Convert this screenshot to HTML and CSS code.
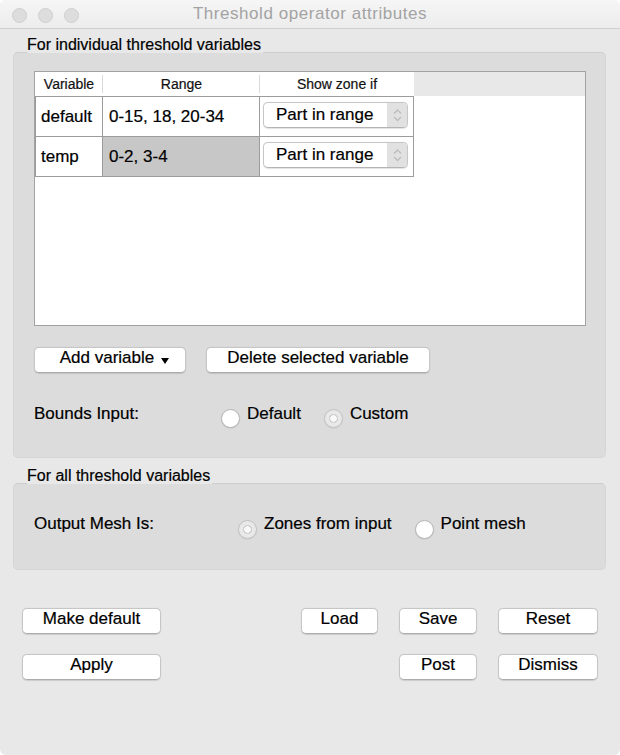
FILE: index.html
```html
<!DOCTYPE html>
<html>
<head>
<meta charset="utf-8">
<title>Threshold operator attributes</title>
<link rel="stylesheet" href="styles.css">
</head>
<body>
<div class="window">
  <div class="titlebar">
    <div class="lights">
      <span class="light"></span><span class="light"></span><span class="light"></span>
    </div>
    <div class="title">Threshold operator attributes</div>
    <div></div>
  </div>

  <div class="content">
    <div class="group-label"><span>For individual threshold variables</span></div>
    <div class="group group-vars">
      <div class="table">
        <div class="thead">
          <div class="th c1">Variable</div>
          <div class="th c2">Range</div>
          <div class="th c3">Show zone if</div>
        </div>
        <div class="tr">
          <div class="td c1">default</div>
          <div class="td c2">0-15, 18, 20-34</div>
          <div class="td c3">
            <div class="combo">
              <span class="combo-text">Part in range</span>
              <span class="stepper"><svg width="20" height="24" viewBox="0 0 20 24"><polyline points="7,10.5 10.5,7 14,10.5" /><polyline points="7,14 10.5,17.5 14,14" /></svg></span>
            </div>
          </div>
        </div>
        <div class="tr last">
          <div class="td c1">temp</div>
          <div class="td c2 selected">0-2, 3-4</div>
          <div class="td c3">
            <div class="combo">
              <span class="combo-text">Part in range</span>
              <span class="stepper"><svg width="20" height="24" viewBox="0 0 20 24"><polyline points="7,10.5 10.5,7 14,10.5" /><polyline points="7,14 10.5,17.5 14,14" /></svg></span>
            </div>
          </div>
        </div>
      </div>

      <div class="btn-row">
        <button class="btn btn-add">Add variable <span class="caret"></span></button>
        <button class="btn btn-delete">Delete selected variable</button>
      </div>

      <div class="radio-row">
        <div class="row-label bounds-label">Bounds Input:</div>
        <div class="radio-opt"><span class="radio"></span><span class="opt-text">Default</span></div>
        <div class="radio-opt"><span class="radio dim"></span><span class="opt-text">Custom</span></div>
      </div>
    </div>

    <div class="group-label second"><span>For all threshold variables</span></div>
    <div class="group group-all">
      <div class="radio-row">
        <div class="row-label mesh-label">Output Mesh Is:</div>
        <div class="radio-opt"><span class="radio dim"></span><span class="opt-text">Zones from input</span></div>
        <div class="radio-opt"><span class="radio"></span><span class="opt-text">Point mesh</span></div>
      </div>
    </div>

    <div class="actions">
      <div class="action-row">
        <button class="btn w-wide">Make default</button>
        <div class="right-group">
          <button class="btn w-load">Load</button>
          <button class="btn w-mid">Save</button>
          <button class="btn w-big">Reset</button>
        </div>
      </div>
      <div class="action-row">
        <button class="btn w-wide">Apply</button>
        <div class="right-group">
          <button class="btn w-mid">Post</button>
          <button class="btn w-big">Dismiss</button>
        </div>
      </div>
    </div>
  </div>
</div>
</body>
</html>
```

FILE: styles.css
```css
* { box-sizing: border-box; }

html, body {
  margin: 0;
  padding: 0;
  background: #ffffff;
}

body {
  font-family: "Liberation Sans", Arial, Helvetica, sans-serif;
  color: #000;
  -webkit-text-stroke: 0.2px;
}

.window {
  width: 620px;
  height: 755px;
  background: #e8e8e8;
  border-radius: 6px;
  overflow: hidden;
}

/* Title bar */
.titlebar {
  height: 29px;
  border-bottom: 1px solid #d0d0d0;
  background: linear-gradient(#f6f6f6, #ececec);
  display: grid;
  grid-template-columns: 1fr auto 1fr;
  align-items: center;
}

.lights {
  display: flex;
  gap: 11px;
  padding-left: 12px;
  padding-top: 2px;
}

.light {
  width: 15px;
  height: 15px;
  border-radius: 50%;
  background: #dddddd;
  border: 1px solid #cfcfcf;
}

.title {
  font-size: 17px;
  line-height: 28px;
  letter-spacing: 0.55px;
  color: #a3a3a3;
  -webkit-text-stroke: 0;
}

/* Content */
.content {
  padding: 8px 14px 0 13px;
}

.group-label {
  font-size: 16px;
  line-height: 16px;
  padding-left: 14px;
  margin-bottom: -1px;
}

.group-label span {
  display: inline-block;
  background: #e8e8e8;
  padding-right: 2px;
}

.group-label.second {
  margin-top: 10px;
}

.group {
  background: #dcdcdc;
  border: 1px solid #d5d5d5;
  border-top-color: #cdcdcd;
  border-radius: 5px;
}

.group-vars {
  padding: 18px 19px 29px 20px;
}

.group-all {
  padding: 30px 19px 30px 20px;
}

/* Table */
.table {
  height: 255px;
  background: #fff;
  border: 1px solid #a2a2a2;
}

.thead {
  display: flex;
  height: 24px;
  background: #e8e8e8;
}

.th {
  background: #fff;
  font-size: 14px;
  line-height: 24px;
  text-align: center;
  color: #111;
}

.th.c1, .th.c2 {
  background: linear-gradient(#dadada, #dadada) right 3px / 1px 18px no-repeat, #fff;
}

.th.c1 { width: 68px; }
.th.c2 { width: 157px; }
.th.c3 { width: 154px; }

.tr {
  display: flex;
  width: 379px;
  height: 40px;
  border-left: 1px solid #9c9c9c;
}

.tr.last {
  height: 41px;
}

.td {
  border-top: 1px solid #9c9c9c;
  border-right: 1px solid #9c9c9c;
  font-size: 17px;
  display: flex;
  align-items: center;
}

.tr.last .td {
  border-bottom: 1px solid #9c9c9c;
}

.td.c1 { width: 67px; padding-left: 5px; }
.td.c2 { width: 157px; padding-left: 6px; }
.td.c3 {
  width: 154px;
  align-items: flex-start;
  padding-top: 5px;
  padding-left: 3px;
}

.td.selected {
  background: #c7c7c7;
}

.combo {
  width: 145px;
  height: 26px;
  border: 1px solid #c6c6c6;
  border-bottom-color: #b4b4b4;
  border-radius: 5px;
  background: #fff;
  display: flex;
  overflow: hidden;
  box-shadow: 0 0.5px 1px rgba(0, 0, 0, 0.12);
}

.combo-text {
  flex: 1;
  font-size: 17px;
  line-height: 24px;
  padding-left: 12px;
}

.stepper {
  width: 20px;
  height: 24px;
  background: #e1e1e1;
  display: block;
}

.stepper svg {
  display: block;
  fill: none;
  stroke: #bdbdbd;
  stroke-width: 1.3;
}

/* Buttons */
.btn {
  font-family: "Liberation Sans", Arial, Helvetica, sans-serif;
  font-size: 17px;
  color: #000;
  height: 26px;
  padding: 0 0 4px 0;
  background: #fff;
  border: 1px solid #c6c6c6;
  border-bottom-color: #acacac;
  border-radius: 5px;
  box-shadow: 0 0.5px 1px rgba(0, 0, 0, 0.12);
  display: flex;
  align-items: center;
  justify-content: center;
  line-height: 20px;
  -webkit-text-stroke: 0.2px;
}

.btn-row {
  display: flex;
  gap: 20px;
  margin-top: 21px;
}

.btn-add {
  width: 152px;
  padding-left: 9px;
}

.caret {
  display: inline-block;
  width: 0;
  height: 0;
  border-left: 4px solid transparent;
  border-right: 4px solid transparent;
  border-top: 6px solid #000;
  margin-left: 7px;
  margin-top: 5px;
}

.btn-delete {
  width: 224px;
}

/* Radio rows */
.radio-row {
  display: flex;
  align-items: flex-start;
}

.group-vars .radio-row {
  margin-top: 31px;
}

.row-label {
  font-size: 17px;
  line-height: 20px;
}

.bounds-label { width: 187px; }
.mesh-label { width: 204px; }

.radio-opt {
  display: flex;
  align-items: flex-start;
  margin-right: 23px;
}

.radio {
  width: 19px;
  height: 19px;
  margin-top: 5px;
  margin-right: 7px;
  border-radius: 50%;
  background: #fff;
  border: 1px solid #b5b5b5;
  box-shadow: 0 0.5px 1px rgba(0, 0, 0, 0.1);
}

.group-all .radio {
  margin-top: 6px;
}

.radio.dim {
  background: radial-gradient(circle at center, #f8f8f8 0, #f8f8f8 3px, #cecece 3.6px, #d2d2d2 4.3px, #e9e9e9 5px, #e6e6e6 100%);
  border-color: #c2c2c2;
}

.opt-text {
  font-size: 17px;
  line-height: 20px;
}

/* Bottom actions */
.actions {
  margin-top: 38px;
  padding: 0 8px 0 9px;
  display: flex;
  flex-direction: column;
  gap: 20px;
}

.action-row {
  display: flex;
  justify-content: space-between;
}

.right-group {
  display: flex;
  gap: 21px;
}

.w-wide { width: 139px; }
.w-load { width: 77px; }
.w-mid { width: 78px; }
.w-big { width: 100px; }
```
